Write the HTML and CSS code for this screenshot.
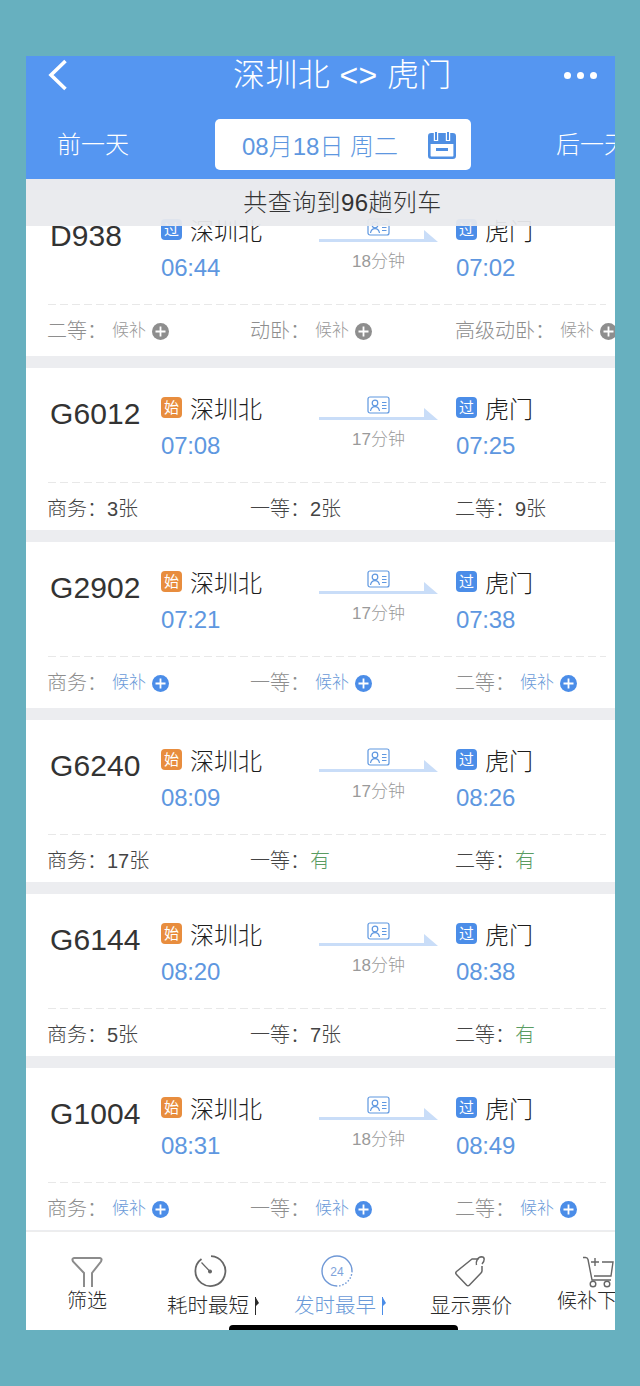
FILE: index.html
```html
<!DOCTYPE html>
<html lang="zh">
<head>
<meta charset="utf-8">
<title>深圳北 &lt;&gt; 虎门</title>
<link rel="stylesheet" href="styles.css">
</head>
<body>
<svg class="defs" width="0" height="0" aria-hidden="true">
  <symbol id="id-card" viewBox="0 0 23 18">
    <rect x="1" y="1" width="21" height="16" rx="2" fill="none" stroke="currentColor" stroke-width="1.2"/>
    <circle cx="8" cy="7" r="2.8" fill="none" stroke="currentColor" stroke-width="1.2"/>
    <path d="M3.5 15c.5-3 2.2-4.4 4.5-4.4s4 1.4 4.5 4.4M15 6.5h4.5M15 9.5h4.5M15 12.5h4.5" fill="none" stroke="currentColor" stroke-width="1.2"/>
  </symbol>
  <symbol id="arrow" viewBox="0 0 119 12">
    <path d="M0 9h105V0l14 12H0z" fill="currentColor"/>
  </symbol>
  <symbol id="plus" viewBox="0 0 17 17">
    <circle cx="8.5" cy="8.5" r="8.5" fill="currentColor"/>
    <path d="M8.5 3.5v10M3.5 8.5h10" stroke="#fff" stroke-width="1.8"/>
  </symbol>
  <symbol id="caret" viewBox="0 0 5 18">
    <path d="M1 0h1v18H1z" fill="currentColor"/>
    <path d="M2 1l3 5-3 3z" fill="currentColor"/>
  </symbol>
</svg>
<main class="phone">
  <header class="head">
    <div class="title-row">
      <div class="back-cell">
        <svg class="back" width="20" height="32" viewBox="0 0 20 32"><path d="M17.5 2L3 16l14.5 14" fill="none" stroke="#fff" stroke-width="3.6"/></svg>
      </div>
      <h1 class="title">深圳北 &lt;&gt; 虎门</h1>
      <div class="dots"><i></i><i></i><i></i></div>
    </div>
    <nav class="date-row">
      <span class="day-link">前一天</span>
      <div class="date-box">
        <span class="date-text">08月18日 周二</span>
        <svg class="cal" width="28" height="28" viewBox="0 0 28 28">
          <rect x="1.300" y="3.300" width="25.400" height="23.400" rx="2" fill="#fff" stroke="#4f8fe3" stroke-width="2.600"/>
          <path d="M2 4h24v9H2z" fill="#4f8fe3"/>
          <path d="M8 1v9M20 1v9" stroke="#fff" stroke-width="4.400"/>
          <path d="M8 1v8M20 1v8" stroke="#4f8fe3" stroke-width="2"/>
          <path d="M8 18.500h12" stroke="#4f8fe3" stroke-width="3"/>
        </svg>
      </div>
      <span class="day-link">后一天</span>
    </nav>
  </header>
  <div class="count">共查询到96趟列车</div>

  <section class="list">
    <article class="card tall">
      <div class="route">
        <div class="num">D938</div>
        <div class="stop dep"><div class="st"><b class="badge blue">过</b>深圳北</div><div class="time">06:44</div></div>
        <div class="mid"><svg class="idc"><use href="#id-card"/></svg><svg class="arr"><use href="#arrow"/></svg><div class="dur">18分钟</div></div>
        <div class="stop"><div class="st"><b class="badge blue">过</b>虎门</div><div class="time">07:02</div></div>
      </div>
      <div class="seats">
        <div class="seat off">二等：<span class="wait">候补<svg class="plus"><use href="#plus"/></svg></span></div>
        <div class="seat off">动卧：<span class="wait">候补<svg class="plus"><use href="#plus"/></svg></span></div>
        <div class="seat off">高级动卧：<span class="wait">候补<svg class="plus"><use href="#plus"/></svg></span></div>
      </div>
    </article>

    <article class="card">
      <div class="route">
        <div class="num">G6012</div>
        <div class="stop dep"><div class="st"><b class="badge orange">始</b>深圳北</div><div class="time">07:08</div></div>
        <div class="mid"><svg class="idc"><use href="#id-card"/></svg><svg class="arr"><use href="#arrow"/></svg><div class="dur">17分钟</div></div>
        <div class="stop"><div class="st"><b class="badge blue">过</b>虎门</div><div class="time">07:25</div></div>
      </div>
      <div class="seats">
        <div class="seat">商务：<span class="left">3张</span></div>
        <div class="seat">一等：<span class="left">2张</span></div>
        <div class="seat">二等：<span class="left">9张</span></div>
      </div>
    </article>

    <article class="card tall">
      <div class="route">
        <div class="num">G2902</div>
        <div class="stop dep"><div class="st"><b class="badge orange">始</b>深圳北</div><div class="time">07:21</div></div>
        <div class="mid"><svg class="idc"><use href="#id-card"/></svg><svg class="arr"><use href="#arrow"/></svg><div class="dur">17分钟</div></div>
        <div class="stop"><div class="st"><b class="badge blue">过</b>虎门</div><div class="time">07:38</div></div>
      </div>
      <div class="seats">
        <div class="seat off">商务：<span class="wait on">候补<svg class="plus"><use href="#plus"/></svg></span></div>
        <div class="seat off">一等：<span class="wait on">候补<svg class="plus"><use href="#plus"/></svg></span></div>
        <div class="seat off">二等：<span class="wait on">候补<svg class="plus"><use href="#plus"/></svg></span></div>
      </div>
    </article>

    <article class="card">
      <div class="route">
        <div class="num">G6240</div>
        <div class="stop dep"><div class="st"><b class="badge orange">始</b>深圳北</div><div class="time">08:09</div></div>
        <div class="mid"><svg class="idc"><use href="#id-card"/></svg><svg class="arr"><use href="#arrow"/></svg><div class="dur">17分钟</div></div>
        <div class="stop"><div class="st"><b class="badge blue">过</b>虎门</div><div class="time">08:26</div></div>
      </div>
      <div class="seats">
        <div class="seat">商务：<span class="left">17张</span></div>
        <div class="seat">一等：<span class="yes">有</span></div>
        <div class="seat">二等：<span class="yes">有</span></div>
      </div>
    </article>

    <article class="card">
      <div class="route">
        <div class="num">G6144</div>
        <div class="stop dep"><div class="st"><b class="badge orange">始</b>深圳北</div><div class="time">08:20</div></div>
        <div class="mid"><svg class="idc"><use href="#id-card"/></svg><svg class="arr"><use href="#arrow"/></svg><div class="dur">18分钟</div></div>
        <div class="stop"><div class="st"><b class="badge blue">过</b>虎门</div><div class="time">08:38</div></div>
      </div>
      <div class="seats">
        <div class="seat">商务：<span class="left">5张</span></div>
        <div class="seat">一等：<span class="left">7张</span></div>
        <div class="seat">二等：<span class="yes">有</span></div>
      </div>
    </article>

    <article class="card">
      <div class="route">
        <div class="num">G1004</div>
        <div class="stop dep"><div class="st"><b class="badge orange">始</b>深圳北</div><div class="time">08:31</div></div>
        <div class="mid"><svg class="idc"><use href="#id-card"/></svg><svg class="arr"><use href="#arrow"/></svg><div class="dur">18分钟</div></div>
        <div class="stop"><div class="st"><b class="badge blue">过</b>虎门</div><div class="time">08:49</div></div>
      </div>
      <div class="seats">
        <div class="seat off">商务：<span class="wait on">候补<svg class="plus"><use href="#plus"/></svg></span></div>
        <div class="seat off">一等：<span class="wait on">候补<svg class="plus"><use href="#plus"/></svg></span></div>
        <div class="seat off">二等：<span class="wait on">候补<svg class="plus"><use href="#plus"/></svg></span></div>
      </div>
    </article>
  </section>

  <footer class="bar">
    <div class="tool">
      <svg class="ico" width="34" height="34" viewBox="0 0 34 34"><path d="M14 33V19L3 7.500Q1.500 4.500 4 4h26q2.500.5 1 3.500L22 19v14" fill="none" stroke="#8c8c8c" stroke-width="2"/></svg>
      <span class="lbl short">筛选</span>
    </div>
    <div class="tool">
      <svg class="ico" width="34" height="34" viewBox="0 0 34 34"><path d="M18 2.100A15 15 0 1 1 8.500 5" fill="none" stroke="#666" stroke-width="1.800"/><path d="M8.500 8.500l8.500 9" stroke="#666" stroke-width="1.200"/><circle cx="17" cy="17.500" r="2" fill="#666"/></svg>
      <span class="lbl sort">耗时最短<svg class="caret"><use href="#caret"/></svg></span>
    </div>
    <div class="tool on">
      <svg class="ico" width="34" height="34" viewBox="0 0 34 34"><path d="M17 2A15 15 0 0 1 32 17" fill="none" stroke="#6f98d6" stroke-width="1.400"/><path d="M32 17A15 15 0 0 1 17 32" fill="none" stroke="#6f98d6" stroke-width="1.400" stroke-dasharray="1.500 1.800"/><path d="M17 32A15 15 0 0 1 17 2" fill="none" stroke="#6f98d6" stroke-width="1.400"/><text x="17" y="21.500" text-anchor="middle" class="ico-num">24</text></svg>
      <span class="lbl sort">发时最早<svg class="caret"><use href="#caret"/></svg></span>
    </div>
    <div class="tool">
      <svg class="ico" width="34" height="34" viewBox="0 0 34 34"><path d="M24.500 5H18L2.500 17.500q-1.500 1.500 0 3L12.500 31q1.500 1.500 3 0L27 19q1.200-1.200 1-3v-4" fill="none" stroke="#666" stroke-width="1.500" stroke-linejoin="round"/><path d="M22.500 11c-1-3 1-8 5-8.300 3.500 0 3.500 4 .5 7.300" fill="none" stroke="#666" stroke-width="1.500"/></svg>
      <span class="lbl">显示票价</span>
    </div>
    <div class="tool cart">
      <svg class="ico" width="34" height="34" viewBox="0 0 34 34"><path d="M0 3.500h2.500q2 0 2.500 2L9 26h19M19 8h11l-2 14H11" fill="none" stroke="#666" stroke-width="1.400"/><path d="M12 4v8M8 8h8" fill="none" stroke="#666" stroke-width="1.400"/><circle cx="10" cy="30" r="2.800" fill="none" stroke="#666" stroke-width="1.400"/><circle cx="24" cy="30" r="2.800" fill="none" stroke="#666" stroke-width="1.400"/></svg>
      <span class="lbl short">候补下单</span>
    </div>
  </footer>
  <div class="home"></div>
</main>
</body>
</html>
```

FILE: styles.css
```css
* { box-sizing: border-box; }
html, body { margin: 0; padding: 0; }
body {
  width: 640px;
  height: 1386px;
  padding: 56px 25px 56px 26px;
  background: #67b0bf;
  font-family: "Liberation Sans", "Noto Sans CJK SC", sans-serif;
  font-weight: 300;
  color: #222;
  overflow: hidden;
}
.defs { position: absolute; }
.phone {
  position: relative;
  width: 589px;
  height: 1274px;
  display: flex;
  flex-direction: column;
  background: #fff;
  overflow: hidden;
}

/* header */
.head {
  flex: none;
  height: 123px;
  background: #5596f1;
  color: #fff;
}
.title-row {
  height: 38px;
  display: flex;
  align-items: center;
  padding-right: 18px;
}
.back-cell { width: 207px; padding-left: 22px; display: flex; }
.title {
  margin: 0;
  font-size: 32px;
  font-weight: 300;
  line-height: 38px;
  letter-spacing: .4px;
  white-space: nowrap;
}
.dots { margin-left: auto; display: flex; gap: 6px; }
.dots i { width: 7px; height: 7px; border-radius: 50%; background: #fff; }
.date-row {
  margin-top: 25px;
  display: flex;
  align-items: center;
  padding-left: 31px;
  gap: 86px;
  overflow: hidden;
}
.day-link { flex: none; font-size: 24px; line-height: 51px; white-space: nowrap; }
.date-box {
  flex: none;
  width: 256px;
  height: 51px;
  margin-right: -1px;
  display: flex;
  align-items: center;
  padding-left: 27px;
  background: #fff;
  border-radius: 5px;
}
.date-text { font-size: 24px; color: #5e97e0; white-space: nowrap; width: 186px; }
.cal { flex: none; }

/* count strip, translucent over the scrolled list */
.count {
  flex: none;
  position: relative;
  z-index: 1;
  height: 47px;
  margin-bottom: -47px;
  padding-left: 44px;
  background: rgba(233, 234, 237, .94);
  font-size: 24px;
  line-height: 47px;
  letter-spacing: .4px;
  text-align: center;
  color: #333;
}

/* list */
.list {
  flex: 1;
  min-height: 0;
  overflow: hidden;
  padding-top: 11px;
  background: #ecedf0;
  display: flex;
  flex-direction: column;
  gap: 12px;
}
.card {
  flex: none;
  height: 162px;
  background: #fff;
  white-space: nowrap;
}
.card.tall { height: 166px; }
.route {
  height: 115px;
  margin: 0 9px 0 22px;
  padding: 26px 0 0 2px;
  display: flex;
  align-items: flex-start;
  background: repeating-linear-gradient(90deg, #e8e8e8 0 8px, transparent 8px 12px) left bottom / 100% 1px no-repeat;
}
.num {
  flex: none;
  width: 111px;
  margin-top: 3px;
  font-size: 30px;
  line-height: 34px;
  letter-spacing: .1px;
  color: #333;
}
.stop { flex: none; }
.stop.dep { width: 158px; }
.st {
  display: flex;
  align-items: center;
  gap: 8px;
  height: 26px;
  font-size: 24px;
  color: #1d1d1d;
}
.badge {
  flex: none;
  width: 21px;
  height: 21px;
  border-radius: 4px;
  color: #fff;
  font-size: 15px;
  font-weight: 400;
  line-height: 21px;
  text-align: center;
}
.badge.blue { background: #4b8de8; }
.badge.orange { background: #e88d3e; }
.time {
  margin-top: 8px;
  font-size: 24px;
  line-height: 36px;
  letter-spacing: -.2px;
  color: #5e97e0;
}
.mid {
  flex: none;
  width: 119px;
  margin-right: 18px;
  display: flex;
  flex-direction: column;
  align-items: center;
}
.idc { width: 23px; height: 18px; margin-top: 2px; color: #5e97e0; }
.arr { width: 119px; height: 12px; margin-top: -6px; color: #c9ddf8; }
.dur {
  margin-top: 8px;
  font-size: 17px;
  line-height: 24px;
  color: #9a9a9a;
}
.seats {
  margin-left: 21px;
  width: 600px;
  padding-top: 14px;
  display: flex;
}
.seat {
  flex: none;
  width: 203px;
  display: flex;
  align-items: center;
  font-size: 20px;
  line-height: 24px;
  color: #444;
}
.seat + .seat + .seat { width: 180px; margin-left: 2px; }
.seat.off { color: #8e8e8e; }
.left { font-size: 20px; color: #444; }
.yes { color: #5a9c62; }
.wait {
  margin-left: 5px;
  display: inline-flex;
  align-items: center;
  gap: 6px;
  font-size: 17px;
  color: #999;
}
.wait.on { color: #6a9ad8; }
.plus { width: 17px; height: 17px; flex: none; color: #8e8e8e; }
.wait.on .plus { color: #4b8de8; }

/* toolbar */
.bar {
  flex: none;
  height: 99px;
  border-top: 1px solid #ededed;
  background: #fff;
  display: grid;
  grid-template-columns: 122px 124px 130px 138px 116px;
  overflow: hidden;
}
.tool {
  padding-top: 22px;
  display: flex;
  flex-direction: column;
  align-items: center;
  color: #2a2a2a;
  white-space: nowrap;
  min-width: 0;
}
.tool.on { color: #6a9ad8; }
.ico { flex: none; }
.lbl {
  margin-top: 4px;
  font-size: 20.500px;
  line-height: 28px;
  display: flex;
  align-items: center;
}
.lbl.short { margin-top: -1px; font-size: 20px; }
.lbl.sort { margin-left: 6px; gap: 5px; }
.caret { width: 5px; height: 18px; flex: none; }
.tool.on .caret { color: #4b8de8; }
.ico-num { font-family: "Liberation Sans", sans-serif; font-size: 12px; fill: #7ea3db; }
.tool.cart { align-items: flex-start; padding-left: 17px; }
.tool.cart .ico { margin-left: 26px; }

/* home indicator sits over the toolbar */
.home {
  position: absolute;
  left: 203px;
  bottom: 0;
  width: 229px;
  height: 5px;
  background: #000;
  border-radius: 4px 4px 0 0;
}
```
